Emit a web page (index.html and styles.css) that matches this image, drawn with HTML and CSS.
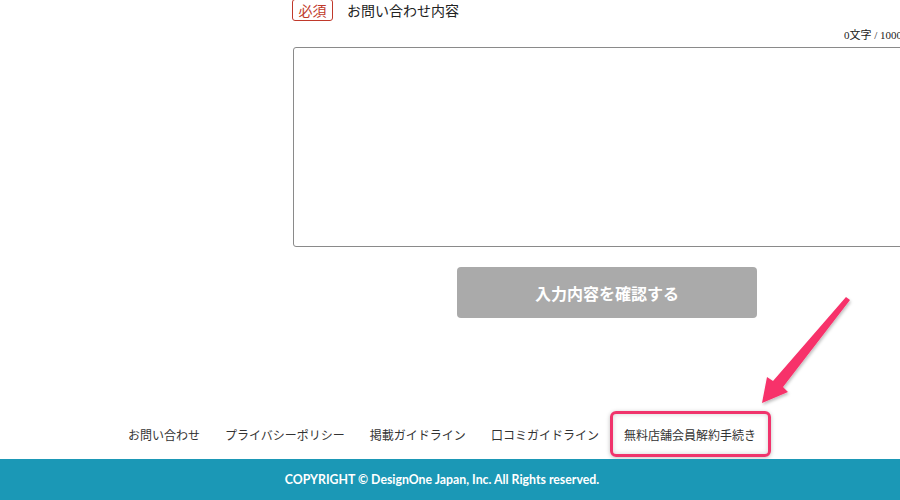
FILE: index.html
```html
<!DOCTYPE html>
<html lang="ja">
<head>
    <meta charset="UTF-8">
    <title>お問い合わせ</title>
    <link rel="stylesheet" href="styles.css">
</head>
<body>
    <div class="page">
        <div class="form-area">
            <div class="field-head">
                <span class="required">必須</span>
                <span class="field-label">お問い合わせ内容</span>
            </div>
            <div class="counter">0文字 / 1000</div>
            <textarea class="message"></textarea>
            <div class="actions">
                <button class="confirm-btn" disabled>入力内容を確認する</button>
            </div>
        </div>

        <nav class="footer-nav">
            <a href="#">お問い合わせ</a>
            <a href="#">プライバシーポリシー</a>
            <a href="#">掲載ガイドライン</a>
            <a href="#">口コミガイドライン</a>
            <a href="#" class="marked">無料店舗会員解約手続き</a>
        </nav>
    </div>

    <footer class="copyright">
        <div class="page">COPYRIGHT © DesignOne Japan, Inc. All Rights reserved.</div>
    </footer>

    <!-- annotation arrow -->
    <svg class="arrow" width="120" height="130" viewBox="0 0 120 130">
        <defs>
            <filter id="sh" x="-20%" y="-20%" width="140%" height="140%">
                <feDropShadow dx="1" dy="2" stdDeviation="1.5" flood-color="#000" flood-opacity="0.25"/>
            </filter>
        </defs>
        <path d="M106 5 L110 8 L43 95 L48 100 L22 111 L27 85 L33 89 Z" fill="#f7316a" filter="url(#sh)"/>
    </svg>
</body>
</html>
```

FILE: styles.css
```css
* {
    margin: 0;
    padding: 0;
    box-sizing: border-box;
}

html, body {
    width: 900px;
    height: 500px;
    overflow: hidden;
}

body {
    background: #ffffff;
    color: #333;
    font-family: "Noto Sans CJK JP", "Noto Sans", sans-serif;
    position: relative;
}

.page {
    width: 884px;
}

.form-area {
    margin-left: 293px;
    width: 628px;
}

.field-head {
    display: flex;
    align-items: center;
    height: 21px;
    margin-top: -1px;
}

.required {
    display: inline-flex;
    align-items: center;
    justify-content: center;
    width: 41px;
    height: 22px;
    margin-left: -1px;
    border: 1px solid #c0392b;
    border-radius: 3px;
    color: #c0392b;
    font-size: 14px;
    line-height: 1;
}

.field-label {
    margin-left: 14px;
    font-size: 14px;
    color: #222;
}

.counter {
    text-align: right;
    padding-right: 19px;
    font-family: "Liberation Serif", "Noto Sans CJK JP", serif;
    font-size: 11px;
    color: #222;
    margin-top: 8px;
    height: 19px;
    line-height: 14px;
    white-space: nowrap;
}

.message {
    display: block;
    width: 628px;
    height: 200px;
    border: 1px solid #8a8a8a;
    border-radius: 3px;
    resize: none;
    background: #fff;
}

.actions {
    display: flex;
    justify-content: center;
    margin-top: 20px;
}

.confirm-btn {
    width: 300px;
    height: 51px;
    background: #aaaaaa;
    border: none;
    border-radius: 4px;
    color: #fff;
    font-family: "Noto Sans CJK JP", sans-serif;
    font-size: 16px;
    font-weight: 700;
}

.footer-nav {
    display: flex;
    justify-content: center;
    margin-top: 99px;
    height: 35px;
    align-items: center;
}

.footer-nav a {
    position: relative;
    padding: 0 12.5px;
    color: #333;
    font-size: 12px;
    text-decoration: none;
}

.footer-nav a.marked::after {
    content: '';
    position: absolute;
    left: -1px;
    right: -3px;
    top: -15px;
    bottom: -14px;
    border: 3px solid #f0346c;
    border-radius: 6px;
    box-shadow: 0 1px 4px rgba(0, 0, 0, 0.25), inset 0 0 5px rgba(0, 0, 0, 0.18);
}

.copyright {
    position: absolute;
    left: 0;
    top: 459px;
    width: 900px;
    height: 41px;
    background: #1b98b6;
    color: #fff;
}

.copyright .page {
    text-align: center;
    font-family: Lato, "Open Sans", sans-serif;
    font-weight: 700;
    font-size: 12.3px;
    line-height: 41px;
}

.arrow {
    position: absolute;
    left: 740px;
    top: 292px;
}
```
